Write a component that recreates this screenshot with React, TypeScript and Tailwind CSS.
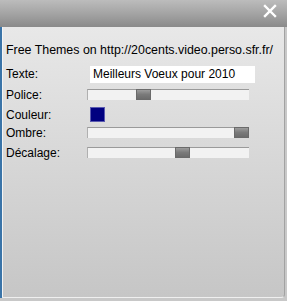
import React from 'react';

const Slider: React.FC<{ pos: number }> = ({ pos }) => (
  <div className="relative h-[11px] w-[162px] border-t border-[#9a9a9a] border-l border-l-[#b0b0b0] bg-[#f2f2f2]">
    <div
      className="absolute top-[-1px] h-[11px] w-[15px] border border-[#6a6a6a] bg-gradient-to-b from-[#9c9c9c] via-[#7a7a7a] to-[#6c6c6c]"
      style={{ left: pos }}
    />
  </div>
);

const App: React.FC = () => {
  return (
    <div className="flex h-[301px] w-[287px] flex-col bg-[#c8c8c8] font-['Liberation_Sans',Arial,sans-serif] text-[12px] text-black">
      <div className="flex h-[27px] shrink-0 items-start justify-end bg-gradient-to-b from-[#bcbcbc] via-[#a4a4a4] to-[#8a8a8a] pr-[10px] pt-[4px]">
        <svg width="14" height="14" viewBox="0 0 14 14">
          <path d="M2 2 L12 12 M12 2 L2 12" stroke="white" strokeWidth="2.4" strokeLinecap="square" />
        </svg>
      </div>
      <div className="flex flex-1">
        <div className="w-[2px] bg-[#3a74a8]" />
        <div className="flex flex-1 flex-col rounded-br-[4px] border-l border-r border-b border-l-[#f4f4f4] border-r-[#a2a2a2] border-b-[#efefef] bg-gradient-to-b from-[#e8e8e8] to-[#c6c6c6] pl-[3px]">
          <div className="mt-[14px] overflow-hidden whitespace-nowrap text-[12.4px]">Free Themes on http://20cents.video.perso.sfr.fr/</div>
          <div className="mt-[6px] flex h-[17px] items-center">
            <span className="w-[84px]">Texte:</span>
            <div className="flex h-[17px] w-[165px] items-center bg-white pl-[3px]">Meilleurs Voeux pour 2010</div>
          </div>
          <div className="mt-[5px] flex h-[14px] items-center">
            <span className="w-[81px]">Police:</span>
            <Slider pos={48} />
          </div>
          <div className="mt-[4px] flex h-[18px] items-center">
            <span className="w-[84px]">Couleur:</span>
            <div className="h-[15px] w-[15px] border border-[#5a5ab0] bg-[#000080]" />
          </div>
          <div className="mt-[2px] flex h-[14px] items-center">
            <span className="w-[81px]">Ombre:</span>
            <Slider pos={146} />
          </div>
          <div className="mt-[6px] flex h-[14px] items-center">
            <span className="w-[81px]">Décalage:</span>
            <Slider pos={87} />
          </div>
        </div>
        <div className="w-[2px]" />
      </div>
      <div className="h-[3px] shrink-0" />
    </div>
  );
};

export default App;
